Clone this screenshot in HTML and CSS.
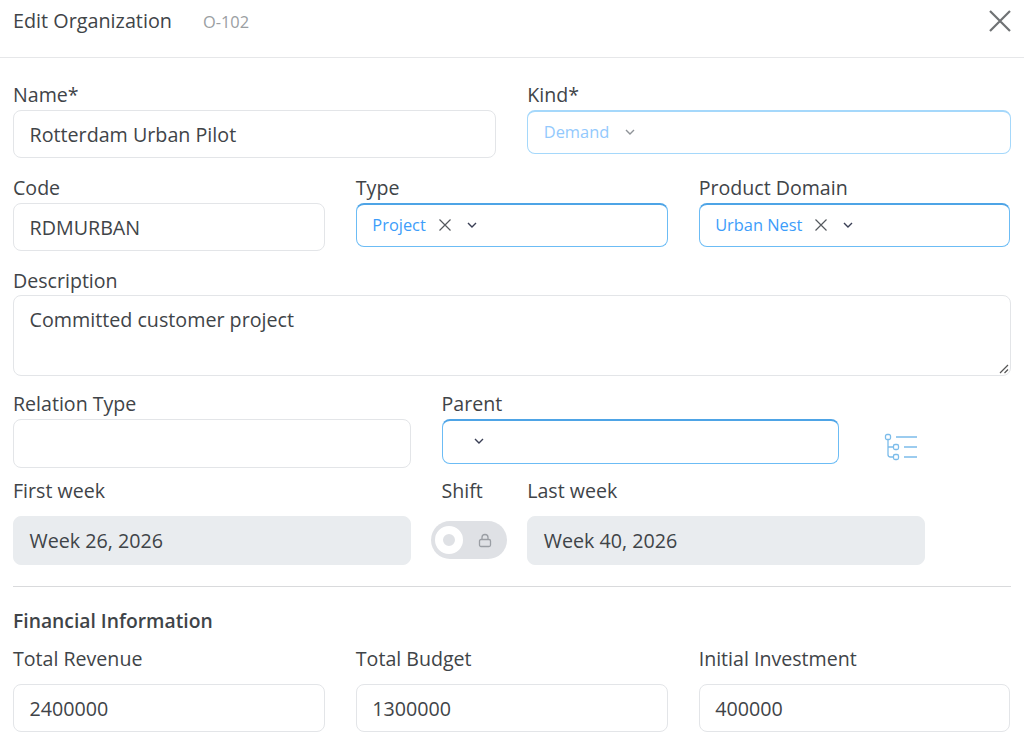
FILE: index.html
```html
<!DOCTYPE html>
<html lang="en">
<head>
    <meta charset="utf-8">
    <title>Edit Organization</title>
    <link rel="stylesheet" href="styles.css">
</head>
<body>
    <div class="header">
        <span class="title">Edit Organization</span>
        <span class="code">O-102</span>
        <svg class="close" width="24" height="24" viewBox="0 0 24 24"><path d="M2 2 22 22M22 2 2 22" /></svg>
    </div>
    <div class="form">
        <div class="row row-1">
            <div class="field span-6">
                <label>Name*</label>
                <div class="input">Rotterdam Urban Pilot</div>
            </div>
            <div class="field span-6">
                <label>Kind*</label>
                <div class="select faded">
                    <span class="tag">Demand</span>
                    <svg class="chevron grey" width="12" height="8" viewBox="0 0 12 8"><path d="M2 2 6 6 10 2" /></svg>
                </div>
            </div>
        </div>
        <div class="row row-2">
            <div class="field span-4">
                <label>Code</label>
                <div class="input">RDMURBAN</div>
            </div>
            <div class="field span-4">
                <label>Type</label>
                <div class="select">
                    <span class="tag">Project</span>
                    <svg class="remove" width="14" height="14" viewBox="0 0 14 14"><path d="M1.5 1.5 12.5 12.5M12.5 1.5 1.5 12.5" /></svg>
                    <svg class="chevron" width="12" height="8" viewBox="0 0 12 8"><path d="M2 2 6 6 10 2" /></svg>
                </div>
            </div>
            <div class="field span-4">
                <label>Product Domain</label>
                <div class="select">
                    <span class="tag">Urban Nest</span>
                    <svg class="remove" width="14" height="14" viewBox="0 0 14 14"><path d="M1.5 1.5 12.5 12.5M12.5 1.5 1.5 12.5" /></svg>
                    <svg class="chevron" width="12" height="8" viewBox="0 0 12 8"><path d="M2 2 6 6 10 2" /></svg>
                </div>
            </div>
        </div>
        <div class="row row-3">
            <div class="field span-12">
                <label>Description</label>
                <div class="input textarea">Committed customer project
                    <svg class="grip" width="10" height="10" viewBox="0 0 10 10"><path d="M1 9 9 1M5.500 9 9 5.500" /></svg>
                </div>
            </div>
        </div>
        <div class="row row-4">
            <div class="field span-5">
                <label class="label-short">Relation Type</label>
                <div class="input input-tall"></div>
            </div>
            <div class="field span-5">
                <label class="label-short">Parent</label>
                <div class="select parent">
                    <svg class="chevron" width="12" height="8" viewBox="0 0 12 8"><path d="M2 2 6 6 10 2" /></svg>
                </div>
            </div>
            <div class="tree-cell span-2">
                <svg class="tree" width="34" height="28" viewBox="0 0 34 28">
                    <rect x="1.500" y="1.500" width="5" height="5" rx="1.500" />
                    <rect x="9.500" y="11.500" width="5" height="5" rx="1.500" />
                    <rect x="9.500" y="21.500" width="5" height="5" rx="1.500" />
                    <path d="M4 6.500V21.500Q4 24 6.500 24H9.500M4 14H9.500M12 4H33M20 14H33M20 24H33" />
                </svg>
            </div>
        </div>
        <div class="row row-5">
            <div class="field span-5">
                <label class="label-tall">First week</label>
                <div class="input input-tall disabled">Week 26, 2026</div>
            </div>
            <div class="field span-1">
                <label class="label-tall">Shift</label>
                <div class="toggle">
                    <span class="knob"></span>
                    <svg class="lock" width="14" height="15" viewBox="0 0 14 15">
                        <rect x="1.500" y="6.500" width="11" height="7" rx="1.500" />
                        <path d="M4 6.500V4.500A3 3 0 0 1 10 4.500V6.500" />
                    </svg>
                </div>
            </div>
            <div class="field span-5">
                <label class="label-tall">Last week</label>
                <div class="input input-tall disabled">Week 40, 2026</div>
            </div>
        </div>
        <hr class="divider">
        <h3 class="section">Financial Information</h3>
        <div class="row">
            <div class="field span-4">
                <label class="label-tall">Total Revenue</label>
                <div class="input">2400000</div>
            </div>
            <div class="field span-4">
                <label class="label-tall">Total Budget</label>
                <div class="input">1300000</div>
            </div>
            <div class="field span-4">
                <label class="label-tall">Initial Investment</label>
                <div class="input">400000</div>
            </div>
        </div>
    </div>
</body>
</html>
```

FILE: styles.css
```css
html, body {
    height: 737px;
    overflow: hidden;
}
body {
    margin: 0;
    background: #fff;
    color: #3f4448;
    font-family: "Open Sans", "Noto Sans", sans-serif;
    font-size: 19.6px;
}
.header {
    height: 58px;
    box-sizing: border-box;
    border-bottom: 1px solid #e6e7e9;
    padding: 7px 13px 0;
    display: flex;
    align-items: flex-start;
    line-height: 27px;
}
.title {
    font-size: 19.8px;
}
.code {
    margin-left: 31px;
    margin-top: 1px;
    font-size: 16.4px;
    color: #9a9ea2;
}
.close {
    margin-left: auto;
    margin-right: -1px;
    margin-top: 2px;
    fill: none;
    stroke: #6f7274;
    stroke-width: 2.200;
}
.form {
    padding: 24px 13.5px 0 13px;
}
.row {
    display: grid;
    grid-template-columns: repeat(12, minmax(0, 1fr));
    column-gap: 31px;
    align-items: start;
}
.row-1 { height: 93px; }
.row-2 { height: 93px; }
.row-3 { height: 124px; }
.row-4 { height: 87px; }
.row-5 { height: 107px; }
.span-1 { grid-column: span 1; }
.span-2 { grid-column: span 2; }
.span-4 { grid-column: span 4; }
.span-5 { grid-column: span 5; }
.span-6 { grid-column: span 6; }
.span-12 { grid-column: span 12; }
label {
    display: block;
    height: 28px;
    line-height: 26px;
    font-size: 19.6px;
    white-space: nowrap;
}
.label-tall {
    height: 37px;
    line-height: 24px;
}
.label-short {
    height: 27px;
    line-height: 24px;
}
.input {
    height: 48px;
    box-sizing: border-box;
    border: 1px solid #e3e5e8;
    border-radius: 8px;
    padding: 0 15.5px;
    line-height: 48px;
    font-size: 19.7px;
}
.input-tall {
    height: 49px;
    line-height: 48px;
}
.textarea {
    position: relative;
    height: 81px;
    line-height: 48px;
    margin-top: -1px;
}
.grip {
    position: absolute;
    right: 1px;
    bottom: 1px;
    fill: none;
    stroke: #555;
    stroke-width: 1.200;
}
.disabled {
    background: #e9ecef;
    border-color: #e9ecef;
}
.select {
    height: 44px;
    box-sizing: border-box;
    border: 1px solid #6cbcf5;
    border-top: 2px solid #4ea4e6;
    border-radius: 8px;
    padding: 0 15.5px 2px;
    display: flex;
    align-items: center;
    color: #3d9dfa;
    font-size: 16.4px;
}
.faded {
    border-color: #a5d8fb;
}
.faded .tag {
    color: #93c9fd;
}
.chevron {
    margin-left: 14px;
    fill: none;
    stroke: #3a3f55;
    stroke-width: 1.400;
}
.chevron.grey {
    margin-left: 15px;
    stroke: #8f9398;
}
.remove {
    margin-left: 12px;
    fill: none;
    stroke: #55595e;
    stroke-width: 1.200;
}
.parent {
    padding-left: 30px;
    height: 45px;
}
.parent .chevron {
    margin-left: 0;
}
.tree-cell {
    padding-top: 41px;
    padding-left: 14px;
}
.tree {
    display: block;
    fill: none;
    stroke: #7cbcea;
    stroke-width: 1.300;
}
.toggle {
    width: 76px;
    height: 38px;
    margin: 5px 0 0 -10.5px;
    border-radius: 19px;
    background: #dfe1e5;
    display: flex;
    align-items: center;
    padding-left: 4px;
    box-sizing: border-box;
}
.knob {
    width: 12px;
    height: 12px;
    border: 8px solid #fff;
    border-radius: 50%;
    background: #dfe1e5;
}
.lock {
    margin-left: 15px;
    fill: none;
    stroke: #9a9ea4;
    stroke-width: 1.300;
}
.divider {
    margin: 0;
    border: 0;
    border-top: 1px solid #d9dadc;
}
.section {
    margin: 22px 0 0;
    height: 38px;
    line-height: 24px;
    font-size: 19.3px;
    font-weight: 600;
}
```
